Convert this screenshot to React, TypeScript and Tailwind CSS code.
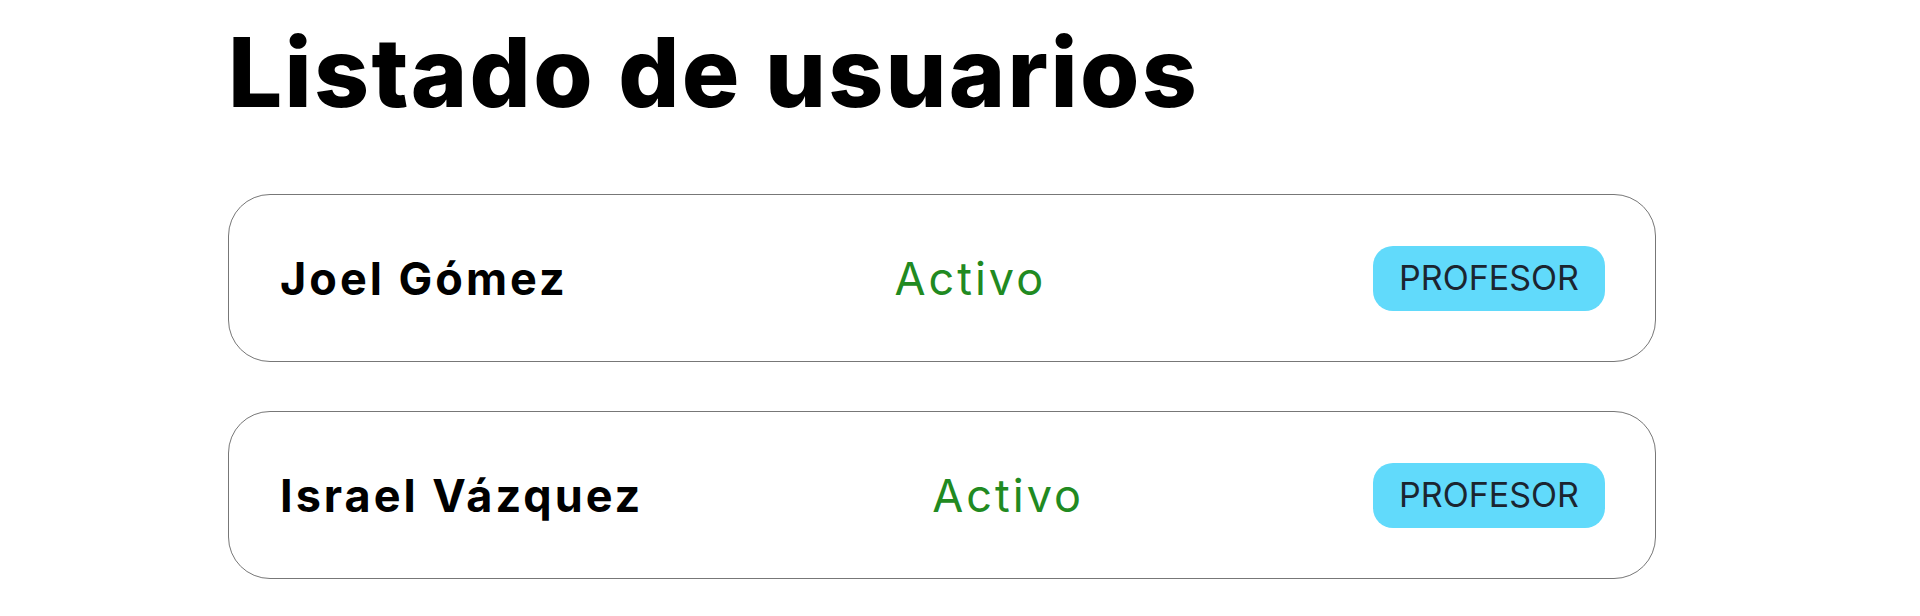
import React from "react";

const users = [
  { name: "Joel Gómez", status: "Activo", role: "PROFESOR" },
  { name: "Israel Vázquez", status: "Activo", role: "PROFESOR" },
];

export default function App() {
  return (
    <div
      className="min-h-[616px] w-full bg-white pl-[228px]"
      style={{ fontFamily: "Inter, 'Noto Sans', sans-serif" }}
    >
      <h1 className="mt-0 pt-[24px] text-[96px] font-extrabold leading-[96px] tracking-[2.3px] text-black">
        Listado de usuarios
      </h1>
      <div className="mt-[74px] flex w-[1428px] flex-col gap-[49px]">
        {users.map((u) => (
          <div
            key={u.name}
            className="flex h-[168px] items-center justify-between rounded-[42px] border border-[#777777] pl-[51px] pr-[50px]"
          >
            <span className="text-[45px] font-bold leading-none tracking-[3px] text-black">
              {u.name}
            </span>
            <span className="text-[45px] font-normal leading-none tracking-[3px] text-[#218a21]">
              {u.status}
            </span>
            <span className="flex h-[65px] w-[232px] items-center justify-center rounded-[20px] bg-[#61dafb] text-[34px] font-normal leading-none text-[#1b2530]">
              {u.role}
            </span>
          </div>
        ))}
      </div>
    </div>
  );
}
